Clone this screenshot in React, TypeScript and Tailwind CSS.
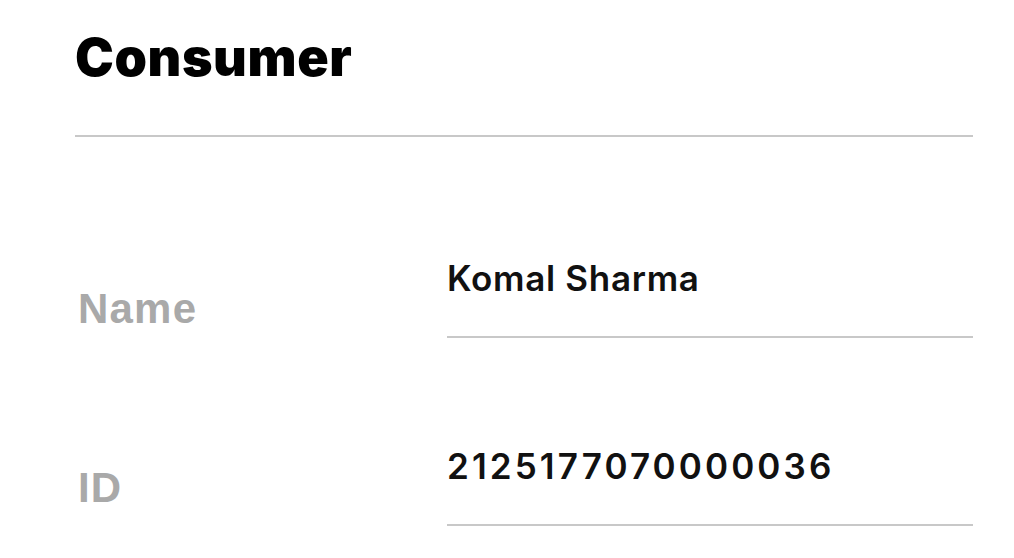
import React from 'react';

interface Field {
  label: string;
  value: string;
  labelOffset: string;
  rowGap: string;
  valueTracking: string;
}

const fields: Field[] = [
  {
    label: 'Name',
    value: 'Komal Sharma',
    labelOffset: 'pt-[27px]',
    rowGap: 'mt-[124px]',
    valueTracking: 'tracking-[0.7px]',
  },
  {
    label: 'ID',
    value: '2125177070000036',
    labelOffset: 'pt-[18px]',
    rowGap: 'mt-[111px]',
    valueTracking: 'tracking-[3.1px]',
  },
];

const App: React.FC = () => {
  return (
    <div className="w-[1014px] h-[558px] bg-white overflow-hidden pl-[75px] pr-[41px] font-['Inter',sans-serif]">
      {/* Section header */}
      <h1 className="pt-[32px] text-[52px] leading-none font-black tracking-[0.6px] text-black">
        Consumer
      </h1>
      <div className="mt-[51px] h-[2px] bg-[#c8c8c8]" />

      {/* Fields */}
      {fields.map((f) => (
        <div key={f.label} className={`${f.rowGap} grid grid-cols-[372px_1fr] items-start`}>
          <div
            className={`${f.labelOffset} pl-[3px] text-[42px] leading-none font-bold tracking-[1.2px] text-[#a9a9a9] font-['Liberation_Sans',sans-serif]`}
          >
            {f.label}
          </div>
          <div className="pb-[40px] border-b-2 border-[#c8c8c8]">
            <div className={`text-[35px] leading-none font-semibold text-[#111] ${f.valueTracking}`}>
              {f.value}
            </div>
          </div>
        </div>
      ))}
    </div>
  );
};

export default App;
